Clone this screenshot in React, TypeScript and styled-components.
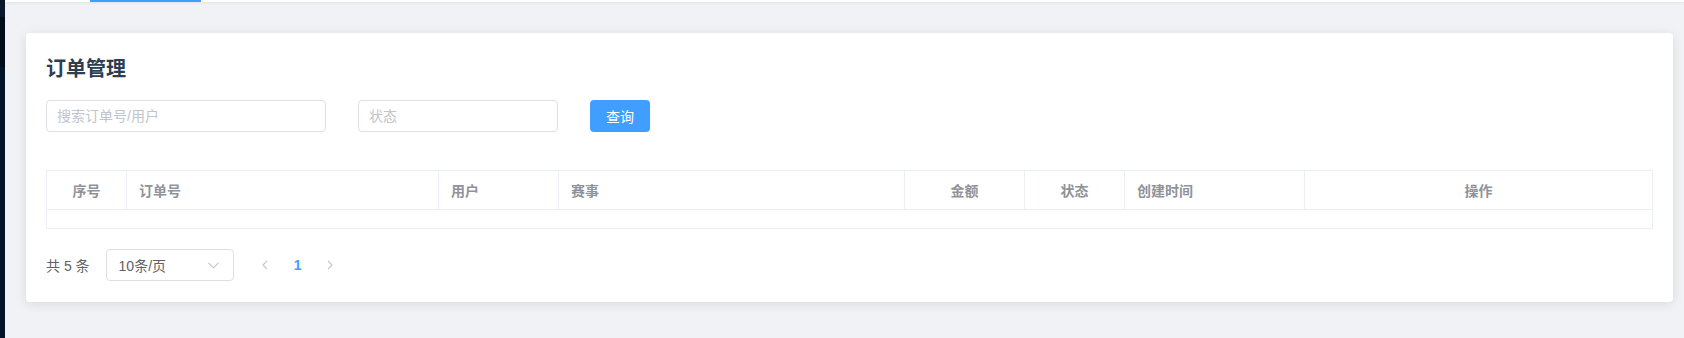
import React from "react";
import styled, { createGlobalStyle } from "styled-components";

const GlobalStyle = createGlobalStyle`
    html, body {
        margin: 0;
        padding: 0;
        background: #f0f2f5;
        font-family: "Liberation Sans", "Noto Sans CJK SC", sans-serif;
    }
    * {
        box-sizing: border-box;
    }
`

const Layout = styled.div`
    display: flex;
    min-height: 100vh;
`

const Sidebar = styled.aside`
    width: 5px;
    flex-shrink: 0;
    background-color: #001529;
    display: flex;
    flex-direction: column;
`

const SideLogo = styled.div`
    height: 17px;
    background-color: #0a1a2a;
`

const SideActive = styled.div`
    height: 50px;
    background-color: #000c17;
`

const Main = styled.main`
    flex: 1;
    display: flex;
    flex-direction: column;
    min-width: 0;
`

const TopBar = styled.div`
    height: 2px;
    background: #ffffff;
    padding-left: 85px;
    display: flex;
    box-shadow: 0 1px 3px rgba(0, 21, 41, 0.08);
`

const ActiveTab = styled.div`
    width: 111px;
    height: 2px;
    background: #409eff;
`

const Content = styled.div`
    padding: 31px 11px 0 21px;
`

const Card = styled.section`
    background: #ffffff;
    border-radius: 4px;
    box-shadow: 0 2px 12px 0 rgba(0, 0, 0, 0.1);
    padding: 20px 20px 21px;
`

const Title = styled.h2`
    margin: 2px 0 17px;
    font-size: 20px;
    line-height: 28px;
    font-weight: 700;
    color: #2c3e50;
`

const Filters = styled.div`
    display: flex;
    align-items: center;
    gap: 32px;
`

const TextInput = styled.input<{ $width: number }>`
    width: ${(p) => p.$width}px;
    height: 32px;
    border: 1px solid #dcdfe6;
    border-radius: 4px;
    padding: 0 10px;
    font-size: 14px;
    font-family: inherit;
    color: #606266;
    outline: none;
    &::placeholder {
        color: #c0c4cc;
    }
`

const PrimaryButton = styled.button`
    width: 60px;
    height: 32px;
    border: none;
    border-radius: 4px;
    background: #409eff;
    color: #ffffff;
    font-size: 14px;
    font-family: inherit;
    cursor: pointer;
`

const Table = styled.table`
    width: 100%;
    margin-top: 38px;
    border-collapse: collapse;
    table-layout: fixed;
    border: 1px solid #ebeef5;
`

const HeadCell = styled.th<{ $align?: string }>`
    height: 39px;
    padding: 0 12px;
    text-align: ${(p) => p.$align || "left"};
    font-size: 14px;
    font-weight: 700;
    color: #909399;
    border-right: 1px solid #ebeef5;
    border-bottom: 1px solid #ebeef5;
    white-space: nowrap;
`

const EmptyCell = styled.td`
    height: 19px;
    padding: 0;
`

const Pagination = styled.div`
    display: flex;
    align-items: center;
    margin-top: 20px;
    font-size: 14px;
    color: #606266;
`

const Total = styled.span`
    white-space: pre;
    margin-right: 16px;
`

const SizeSelect = styled.div`
    width: 128px;
    height: 32px;
    border: 1px solid #dcdfe6;
    border-radius: 4px;
    padding: 0 14px 0 12px;
    display: flex;
    align-items: center;
    justify-content: space-between;
    color: #606266;
`

const PageButton = styled.button<{ $width: number; $active?: boolean; $first?: boolean }>`
    width: ${(p) => p.$width}px;
    height: 28px;
    margin-left: ${(p) => (p.$first ? "16px" : "0")};
    border: none;
    background: transparent;
    padding: 0;
    display: flex;
    align-items: center;
    justify-content: center;
    font-size: 14px;
    font-family: inherit;
    font-weight: 700;
    color: ${(p) => (p.$active ? "#409eff" : "#c0c4cc")};
`

const Chevron = ({ dir }: { dir: "left" | "right" | "down" }) => {
    if (dir === "down") {
        return (
            <svg width="11" height="7" viewBox="0 0 11 7">
                <path d="M0.5 0.8 L5.5 5.8 L10.5 0.8" fill="none" stroke="#c0c4cc" strokeWidth="1.1" />
            </svg>
        )
    }
    return (
        <svg width="6" height="10" viewBox="0 0 6 10">
            <path
                d={dir === "left" ? "M5 0.8 L1 5 L5 9.2" : "M1 0.8 L5 5 L1 9.2"}
                fill="none"
                stroke="#c0c4cc"
                strokeWidth="1.1"
            />
        </svg>
    )
}

const columns = [
    { title: "序号", width: 80, align: "center" },
    { title: "订单号", width: 312 },
    { title: "用户", width: 120 },
    { title: "赛事", width: 346 },
    { title: "金额", width: 120, align: "center" },
    { title: "状态", width: 100, align: "center" },
    { title: "创建时间", width: 180 },
    { title: "操作", width: 0, align: "center" },
];

export default function App() {
    return (
        <Layout>
            <GlobalStyle />
            <Sidebar>
                <SideLogo />
                <SideActive />
            </Sidebar>
            <Main>
                <TopBar>
                    <ActiveTab />
                </TopBar>
                <Content>
                    <Card>
                        <Title>订单管理</Title>
                        <Filters>
                            <TextInput $width={280} placeholder="搜索订单号/用户" />
                            <TextInput $width={200} placeholder="状态" />
                            <PrimaryButton>查询</PrimaryButton>
                        </Filters>

                        <Table>
                            <colgroup>
                                {columns.map((col) => (
                                    <col key={col.title} style={col.width ? { width: col.width } : undefined} />
                                ))}
                            </colgroup>
                            <thead>
                                <tr>
                                    {columns.map((col) => (
                                        <HeadCell key={col.title} $align={col.align}>{col.title}</HeadCell>
                                    ))}
                                </tr>
                            </thead>
                            <tbody>
                                <tr>
                                    <EmptyCell colSpan={columns.length} />
                                </tr>
                            </tbody>
                        </Table>

                        <Pagination>
                            <Total>共 5 条</Total>
                            <SizeSelect>
                                <span>10条/页</span>
                                <Chevron dir="down" />
                            </SizeSelect>
                            <PageButton $width={30} $first><Chevron dir="left" /></PageButton>
                            <PageButton $width={36} $active>1</PageButton>
                            <PageButton $width={28}><Chevron dir="right" /></PageButton>
                        </Pagination>
                    </Card>
                </Content>
            </Main>
        </Layout>
    )
}
